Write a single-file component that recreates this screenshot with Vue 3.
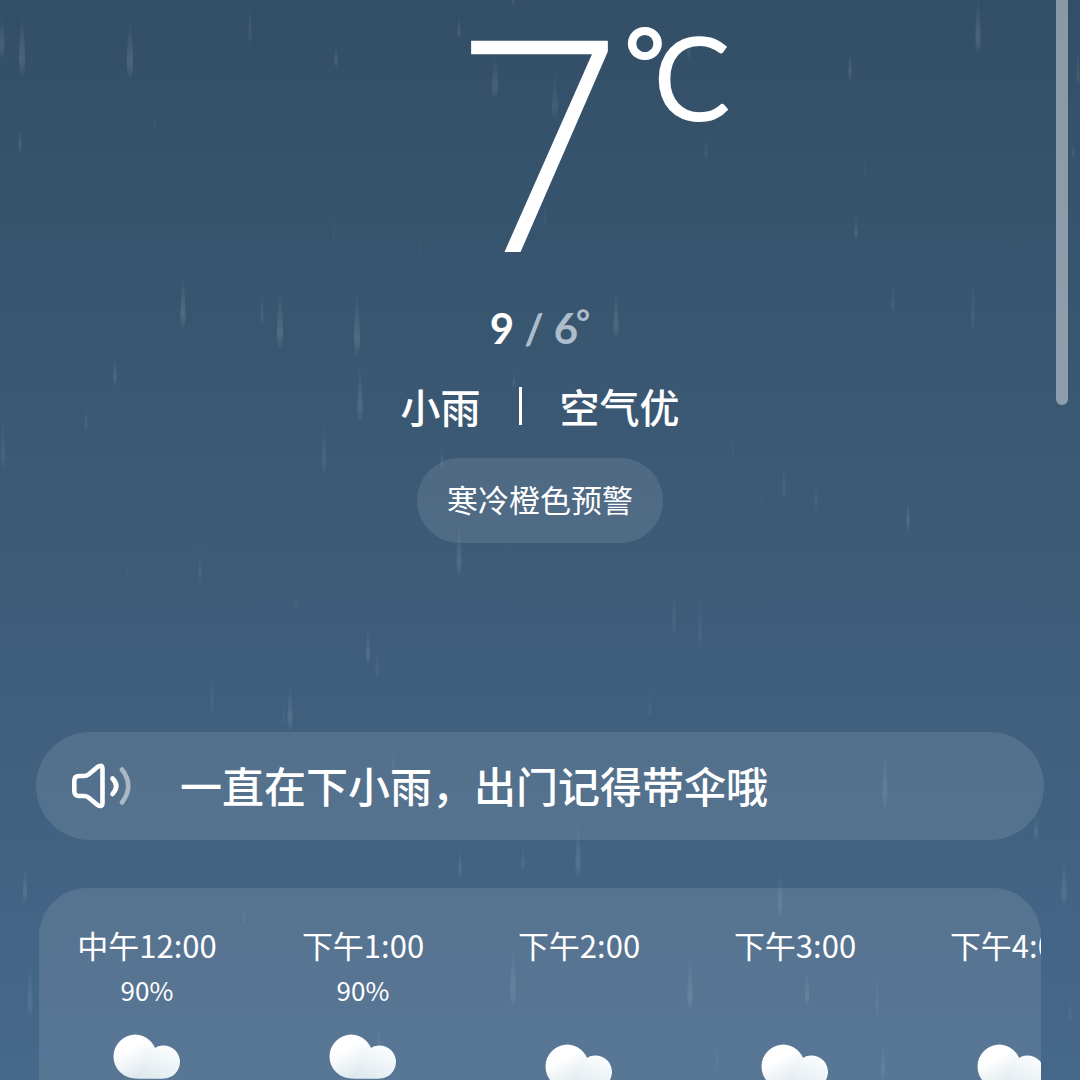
<script setup>
const hours = [
  { time: '中午12:00', chance: '90%' },
  { time: '下午1:00', chance: '90%' },
  { time: '下午2:00', chance: '' },
  { time: '下午3:00', chance: '' },
  { time: '下午4:00', chance: '' },
]

// x, bottom y, length, width, opacity
const drops = [
  [2, 58, 46, 5, 0.14], [22, 75, 64, 6, 0.16], [130, 78, 62, 6, 0.17], [250, 45, 45, 3, 0.09],
  [336, 67, 22, 3, 0.16], [20, 152, 26, 3, 0.15], [155, 130, 20, 2, 0.06], [459, 39, 24, 3, 0.14],
  [513, 6, 12, 3, 0.1], [495, 98, 44, 6, 0.13], [555, 120, 52, 6, 0.1], [689, 60, 36, 3, 0.1],
  [978, 53, 60, 5, 0.17], [850, 80, 32, 3, 0.16], [1078, 86, 40, 3, 0.1], [1073, 158, 16, 3, 0.12],
  [706, 160, 26, 3, 0.08], [545, 224, 18, 3, 0.07], [334, 240, 24, 2, 0.06], [420, 256, 20, 2, 0.06],
  [865, 178, 24, 2, 0.05], [856, 240, 26, 3, 0.16], [893, 312, 32, 3, 0.1], [973, 333, 58, 4, 0.08],
  [183, 328, 54, 5, 0.18], [262, 326, 34, 3, 0.1], [280, 348, 60, 6, 0.18], [357, 355, 64, 6, 0.18],
  [360, 422, 60, 5, 0.16], [616, 338, 50, 5, 0.16], [514, 388, 20, 3, 0.1], [115, 385, 30, 3, 0.15],
  [86, 432, 30, 3, 0.09], [3, 470, 60, 4, 0.09], [324, 475, 58, 4, 0.1], [442, 470, 26, 3, 0.1],
  [733, 455, 20, 2, 0.06], [784, 502, 48, 3, 0.09], [816, 511, 38, 3, 0.08], [762, 508, 14, 2, 0.06],
  [908, 531, 34, 3, 0.17], [459, 576, 54, 5, 0.15], [200, 583, 36, 3, 0.09], [127, 579, 18, 2, 0.05],
  [296, 608, 18, 2, 0.05], [368, 664, 38, 4, 0.17], [377, 677, 26, 3, 0.09], [212, 715, 44, 3, 0.09],
  [290, 731, 50, 5, 0.16], [284, 726, 30, 2, 0.08], [674, 635, 50, 3, 0.09], [700, 649, 58, 4, 0.07],
  [650, 718, 26, 3, 0.07], [393, 774, 26, 3, 0.07], [885, 808, 58, 5, 0.15], [1036, 840, 28, 4, 0.13],
  [460, 879, 34, 3, 0.14], [523, 870, 24, 3, 0.12], [578, 878, 60, 5, 0.16], [25, 902, 38, 4, 0.16],
  [780, 918, 50, 5, 0.15], [1064, 906, 50, 5, 0.14], [244, 925, 22, 3, 0.07], [30, 1018, 62, 5, 0.12],
  [513, 1006, 62, 5, 0.15], [690, 1010, 56, 5, 0.16], [807, 1006, 40, 4, 0.14], [877, 1018, 50, 3, 0.08],
  [1070, 1022, 30, 3, 0.08], [379, 1048, 22, 3, 0.1], [717, 1072, 36, 2, 0.07], [883, 1080, 40, 4, 0.12],
]

function dropPath([x, y, len, w]) {
  const r = w / 2
  const belly = y - len / 4
  return `M${x} ${y - len} Q${x + r} ${belly - len / 4} ${x + r} ${belly} Q${x + r} ${y} ${x} ${y} Q${x - r} ${y} ${x - r} ${belly} Q${x - r} ${belly - len / 4} ${x} ${y - len} Z`
}
</script>

<template>
  <main class="page">
    <svg class="rain" viewBox="0 0 1080 1080" preserveAspectRatio="xMidYMin slice" aria-hidden="true">
      <defs>
        <linearGradient id="drop" x1="0" y1="0" x2="0" y2="1">
          <stop offset="0" stop-color="#c3d7d9" stop-opacity="0" />
          <stop offset="0.75" stop-color="#c3d7d9" stop-opacity="0.9" />
          <stop offset="1" stop-color="#c3d7d9" stop-opacity="0.2" />
        </linearGradient>
      </defs>
      <path v-for="(d, i) in drops" :key="i" :d="dropPath(d)" :opacity="d[4]" fill="url(#drop)" />
    </svg>

    <section class="now">
      <h1 class="temp">
        <span class="value">7</span>
        <span class="unit"><span class="ring">°</span><span class="letter">C</span></span>
      </h1>
      <p class="range"><span>9</span><span class="low">/</span><span class="low">6<sup>°</sup></span></p>
      <p class="condition"><span>小雨</span><i class="bar"></i><span>空气优</span></p>
      <button type="button" class="alert">寒冷橙色预警</button>
    </section>

    <button type="button" class="bulletin">
      <svg class="speaker" viewBox="0 0 64 48" fill="none" stroke="#fff" stroke-width="4.6" stroke-linecap="round" stroke-linejoin="round" aria-hidden="true">
        <path d="M9 14 H14 Q16.500 14 18.500 12.500 L27.500 5 Q32.500 1.500 32.500 7.500 V40.500 Q32.500 46 27.500 43 L18.500 35.500 Q16.500 34 14 34 H9 Q4.300 34 4.300 29 V19 Q4.300 14 9 14 Z" />
        <path d="M42.500 16.500 Q50 24 42.500 32" />
        <path d="M52 7.500 Q64.500 24 52 40.500" opacity="0.5" />
      </svg>
      <span>一直在下小雨，出门记得带伞哦</span>
    </button>

    <ul class="hours">
      <li v-for="h in hours" :key="h.time" class="hour" :class="{ dry: !h.chance }">
        <time>{{ h.time }}</time>
        <span class="chance">{{ h.chance }}</span>
        <svg class="cloud" viewBox="0 0 68 46" aria-hidden="true">
          <defs>
            <linearGradient id="puffBack" x1="0.2" y1="0.1" x2="0.7" y2="1">
              <stop offset="0.25" stop-color="#ffffff" />
              <stop offset="1" stop-color="#d8e4ea" />
            </linearGradient>
            <linearGradient id="puffFront" x1="0.7" y1="0" x2="0.2" y2="1">
              <stop offset="0.1" stop-color="#f8fbfc" />
              <stop offset="1" stop-color="#dfeaef" />
            </linearGradient>
          </defs>
          <path d="M22.500 0.500 A22 22 0 0 0 22.500 44.500 H50 V18 H43.500 A22.500 22.500 0 0 0 22.500 0.500 Z" fill="url(#puffBack)" />
          <path d="M35 26 C37 16 43 11.500 50.500 11.500 A16.500 16.500 0 0 1 50.500 44.500 H24 C30 40 33 33 35 26 Z" fill="url(#puffFront)" />
        </svg>
      </li>
    </ul>

    <div class="scrollbar" aria-hidden="true"></div>
  </main>
</template>

<style>
body {
  overflow: hidden;
}
</style>

<style scoped>
.page {
  position: relative;
  box-sizing: border-box;
  height: 100vh;
  overflow: hidden;
  padding: 0 36px;
  color: #fff;
  background: linear-gradient(#334f67, #3d5b77 50%, #46688a);
  font-family: "Noto Sans CJK SC", sans-serif;
}
.rain {
  position: absolute;
  inset: 0;
  width: 100%;
  height: 100%;
  pointer-events: none;
}
button {
  border: 0;
  color: inherit;
  font-family: inherit;
  background: rgba(255, 255, 255, 0.1);
}
.now {
  display: flex;
  flex-direction: column;
  align-items: center;
}
.temp {
  display: grid;
  grid-template-columns: 1fr auto 1fr;
  width: 100%;
  margin: 0;
  font-family: Lato, sans-serif;
  font-weight: 400;
}
.value {
  grid-column: 2;
  font-family: "Open Sans", sans-serif;
  font-size: 296px;
  line-height: 276px;
  font-weight: 300;
}
.unit {
  display: flex;
  align-items: flex-start;
}
.ring {
  font-size: 98px;
  line-height: 120px;
  font-weight: 700;
}
.letter {
  margin-left: -12px;
  font-size: 116px;
  line-height: 154px;
}
.range {
  display: flex;
  gap: 10px;
  margin: 26px 0 0;
  font-family: Lato, sans-serif;
  font-size: 42px;
  line-height: 52px;
  font-weight: 700;
}
.low {
  color: #adbdcc;
}
.range sup {
  margin-left: -2px;
  line-height: 0;
  font-size: 34px;
  vertical-align: 9px;
}
.condition {
  display: flex;
  align-items: center;
  gap: 38px;
  margin: 22px 0;
  font-size: 40px;
  line-height: 60px;
  font-weight: 500;
}
.bar {
  width: 3px;
  height: 38px;
  background: #fff;
}
.alert {
  height: 85px;
  padding: 0 30px 4px;
  border-radius: 43px;
  font-size: 31px;
}
.bulletin {
  display: flex;
  align-items: center;
  gap: 46px;
  width: 100%;
  height: 108px;
  margin: 189px 0 48px;
  padding: 0 34px;
  border-radius: 54px;
  font-size: 42px;
  font-weight: 500;
}
.bulletin span {
  padding-bottom: 4px;
}
.speaker {
  width: 64px;
  height: 48px;
}
.hours {
  display: flex;
  height: 320px;
  margin: 0 3px;
  padding: 0;
  overflow: hidden;
  list-style: none;
  border-radius: 48px;
  background: rgba(255, 255, 255, 0.1);
}
.hour {
  display: flex;
  flex: none;
  flex-direction: column;
  align-items: center;
  width: 216px;
  padding-top: 34px;
  font-size: 31px;
  line-height: 46px;
}
.chance {
  height: 40px;
  margin-top: 2px;
  font-size: 26px;
  line-height: 40px;
}
.cloud {
  width: 68px;
  height: 46px;
  margin-top: 24px;
}
.dry .cloud {
  margin-top: 34px;
}
.scrollbar {
  position: absolute;
  top: 0;
  right: 12px;
  width: 12px;
  height: 405px;
  border-radius: 0 0 6px 6px;
  background: rgba(255, 255, 255, 0.42);
}
</style>
